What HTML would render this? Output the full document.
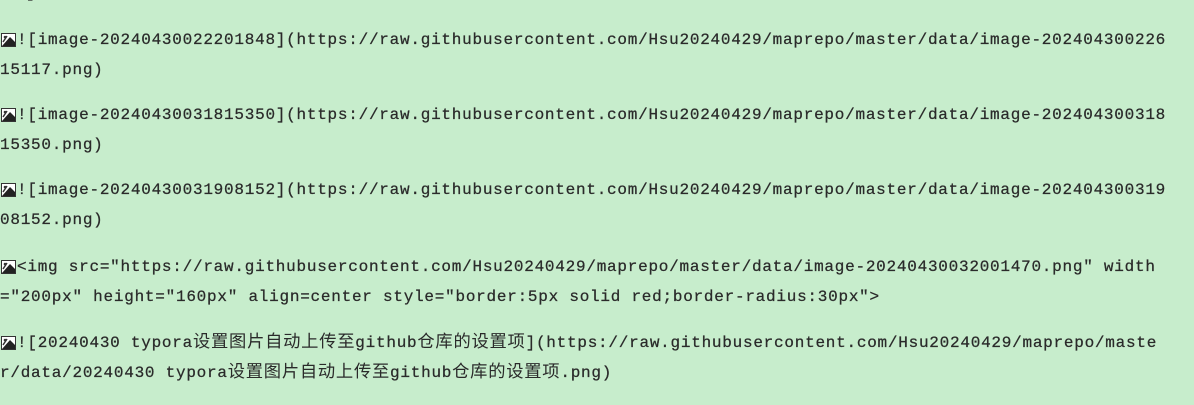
<!DOCTYPE html>
<html><head><meta charset="utf-8"><style>
body{margin:0;width:1194px;height:405px;background:#c7edcc;overflow:hidden;position:relative;}
.l{position:absolute;left:0;white-space:pre;font-family:"Liberation Mono","Noto Sans CJK SC",monospace;font-size:16px;letter-spacing:0.75px;color:#2a2a2a;line-height:30px;-webkit-text-stroke:0.25px #2a2a2a;}
.c{font-size:17.3px;-webkit-text-stroke:0;}
.i{position:absolute;left:1px;width:15px;height:14px;}
</style></head><body>
<div class="l" style="top:-22px;left:26px">]</div>
<svg class="i" style="top:33px" viewBox="0 0 15 14"><rect x="0.5" y="0.5" width="14" height="13" fill="#fff" stroke="#333"/><path d="M1 13 L9 4 L14 9 L14 13 Z" fill="#222"/><path d="M2 9 L6 3" stroke="#333" stroke-width="1.5"/><circle cx="4" cy="4" r="1.3" fill="#333"/></svg>
<div class="l" style="top:25px;left:17px">![image-20240430022201848](https://raw.githubusercontent.com/Hsu20240429/maprepo/master/data/image-202404300226</div>
<div class="l" style="top:55px">15117.png)</div>
<svg class="i" style="top:108px" viewBox="0 0 15 14"><rect x="0.5" y="0.5" width="14" height="13" fill="#fff" stroke="#333"/><path d="M1 13 L9 4 L14 9 L14 13 Z" fill="#222"/><path d="M2 9 L6 3" stroke="#333" stroke-width="1.5"/><circle cx="4" cy="4" r="1.3" fill="#333"/></svg>
<div class="l" style="top:100px;left:17px">![image-20240430031815350](https://raw.githubusercontent.com/Hsu20240429/maprepo/master/data/image-202404300318</div>
<div class="l" style="top:130px">15350.png)</div>
<svg class="i" style="top:183px" viewBox="0 0 15 14"><rect x="0.5" y="0.5" width="14" height="13" fill="#fff" stroke="#333"/><path d="M1 13 L9 4 L14 9 L14 13 Z" fill="#222"/><path d="M2 9 L6 3" stroke="#333" stroke-width="1.5"/><circle cx="4" cy="4" r="1.3" fill="#333"/></svg>
<div class="l" style="top:175px;left:17px">![image-20240430031908152](https://raw.githubusercontent.com/Hsu20240429/maprepo/master/data/image-202404300319</div>
<div class="l" style="top:205px">08152.png)</div>
<svg class="i" style="top:260px" viewBox="0 0 15 14"><rect x="0.5" y="0.5" width="14" height="13" fill="#fff" stroke="#333"/><path d="M1 13 L9 4 L14 9 L14 13 Z" fill="#222"/><path d="M2 9 L6 3" stroke="#333" stroke-width="1.5"/><circle cx="4" cy="4" r="1.3" fill="#333"/></svg>
<div class="l" style="top:252px;left:17px">&lt;img src="https://raw.githubusercontent.com/Hsu20240429/maprepo/master/data/image-20240430032001470.png" width</div>
<div class="l" style="top:282px">="200px" height="160px" align=center style="border:5px solid red;border-radius:30px"&gt;</div>
<svg class="i" style="top:336px" viewBox="0 0 15 14"><rect x="0.5" y="0.5" width="14" height="13" fill="#fff" stroke="#333"/><path d="M1 13 L9 4 L14 9 L14 13 Z" fill="#222"/><path d="M2 9 L6 3" stroke="#333" stroke-width="1.5"/><circle cx="4" cy="4" r="1.3" fill="#333"/></svg>
<div class="l" style="top:328px;left:17px">![20240430 typora<span class="c">设置图片自动上传至</span>github<span class="c">仓库的设置项</span>](https://raw.githubusercontent.com/Hsu20240429/maprepo/maste</div>
<div class="l" style="top:358px">r/data/20240430 typora<span class="c">设置图片自动上传至</span>github<span class="c">仓库的设置项</span>.png)</div>
</body></html>
